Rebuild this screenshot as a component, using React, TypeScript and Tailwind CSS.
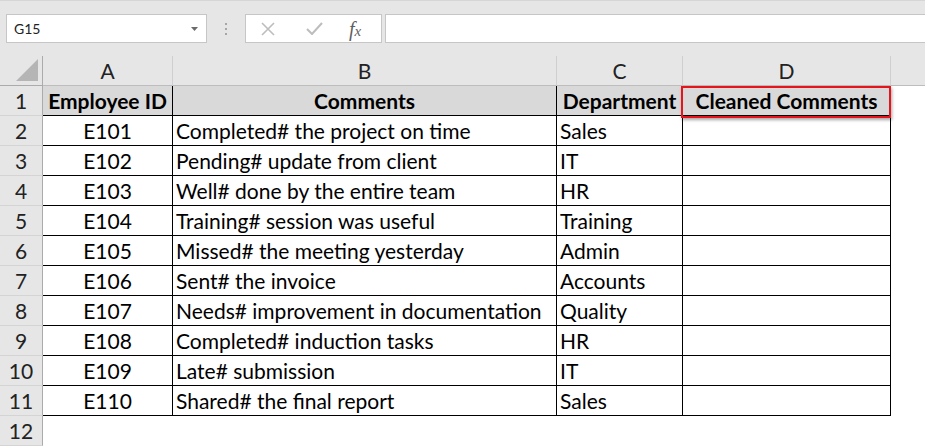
import React from "react";

const font = { fontFamily: "Lato, 'Liberation Sans', sans-serif" };

const columns = ["A", "B", "C", "D"];

const rows: [string, string, string][] = [
  ["E101", "Completed# the project on time", "Sales"],
  ["E102", "Pending# update from client", "IT"],
  ["E103", "Well# done by the entire team", "HR"],
  ["E104", "Training# session was useful", "Training"],
  ["E105", "Missed# the meeting yesterday", "Admin"],
  ["E106", "Sent# the invoice", "Accounts"],
  ["E107", "Needs# improvement in documentation", "Quality"],
  ["E108", "Completed# induction tasks", "HR"],
  ["E109", "Late# submission", "IT"],
  ["E110", "Shared# the final report", "Sales"],
];

const FormulaBar: React.FC = () => (
  <div className="h-[56px] flex items-start pt-[13px] pl-[6px] border-t border-[#d6d6d6]">
    <div className="w-[201px] h-[29px] bg-white border border-[#c6c6c6] flex items-center justify-between pl-[7px] pr-[8px]">
      <span className="text-[14px] text-[#222]">G15</span>
      <svg width="7" height="4" viewBox="0 0 7 4">
        <path d="M0 0 H7 L3.5 4 Z" fill="#6b6b6b" />
      </svg>
    </div>
    <div className="w-[38px] h-[29px] flex flex-col items-center justify-center gap-[3px]">
      <span className="w-[2px] h-[2px] bg-[#a6a6a6]" />
      <span className="w-[2px] h-[2px] bg-[#a6a6a6]" />
      <span className="w-[2px] h-[2px] bg-[#a6a6a6]" />
    </div>
    <div className="w-[137px] h-[29px] bg-white border border-[#c6c6c6] flex items-center">
      <svg className="ml-[15px]" width="14" height="14" viewBox="0 0 14 14">
        <path d="M1 1 L13 13 M13 1 L1 13" stroke="#bdbdbd" strokeWidth="1.6" />
      </svg>
      <svg className="ml-[31px]" width="17" height="13" viewBox="0 0 17 13">
        <path d="M1 7 L6 12 L16 1" stroke="#bdbdbd" strokeWidth="2" fill="none" />
      </svg>
      <span
        className="ml-[26px] text-[20px] italic text-[#5f5f5f] leading-none"
        style={{ fontFamily: "'Liberation Serif', serif" }}
      >
        f<span className="text-[15px]">x</span>
      </span>
    </div>
    <div className="flex-1 h-[29px] ml-[3px] bg-white border border-r-0 border-[#c6c6c6]" />
  </div>
);

const App: React.FC = () => {
  return (
    <div className="w-[925px] h-[446px] overflow-hidden bg-[#e6e6e6] relative" style={font}>
      <FormulaBar />
      <div className="grid grid-cols-[43px_130px_384px_126px_208px_1fr] auto-rows-[30px] text-[21px] leading-[30px]">
        {/* column header row */}
        <div className="border-r border-b border-[#ababab] bg-[#e6e6e6] flex items-end justify-end pr-[4px] pb-[4px]">
          <svg width="22" height="22" viewBox="0 0 22 22">
            <path d="M22 0 V22 H0 Z" fill="#b5b5b5" />
          </svg>
        </div>
        {columns.map((c) => (
          <div
            key={c}
            className="border-r border-b border-r-[#cfcfcf] border-b-[#bdbdbd] text-center text-[#222]"
          >
            {c}
          </div>
        ))}
        <div className="border-b border-[#bdbdbd]" />

        {/* header row 1 */}
        <div className="border-r border-b border-r-[#ababab] border-b-[#d4d4d4] text-center text-[#222]">1</div>
        <div className="bg-[#d9d9d9] border-r border-b border-black text-center font-bold text-black">Employee ID</div>
        <div className="bg-[#d9d9d9] border-r border-b border-black text-center font-bold text-black">Comments</div>
        <div className="bg-[#d9d9d9] border-r border-b border-black text-center font-bold text-black whitespace-nowrap">Department</div>
        <div className="bg-[#d9d9d9] border-r border-b border-black text-center font-bold text-black whitespace-nowrap">Cleaned Comments</div>
        <div className="bg-white" />

        {rows.map(([id, comment, dept], i) => (
          <React.Fragment key={id}>
            <div className="border-r border-b border-r-[#ababab] border-b-[#d4d4d4] text-center text-[#222]">{i + 2}</div>
            <div className="bg-white border-r border-b border-black text-center text-black">{id}</div>
            <div className="bg-white border-r border-b border-black pl-[3px] text-black whitespace-nowrap">{comment}</div>
            <div className="bg-white border-r border-b border-black pl-[3px] text-black">{dept}</div>
            <div className="bg-white border-r border-b border-black" />
            <div className="bg-white" />
          </React.Fragment>
        ))}

        <div className="border-r border-b border-r-[#ababab] border-b-[#d4d4d4] text-center text-[#222]">12</div>
        <div className="bg-white col-span-5" />
      </div>
      <div className="absolute left-[681px] top-[86px] w-[210px] h-[32px] border-2 border-[#e8141b] shadow-[1px_2px_3px_rgba(0,0,0,0.35)]" />
    </div>
  );
};

export default App;
